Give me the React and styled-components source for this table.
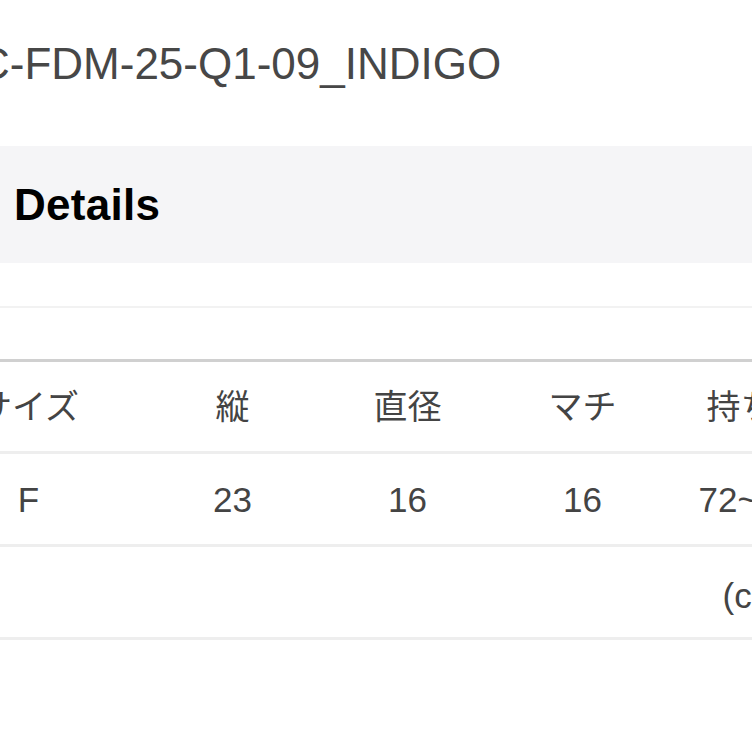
import React from "react";
import styled, { createGlobalStyle } from "styled-components";

const Global = createGlobalStyle`
  html, body { margin: 0; padding: 0; background: #ffffff; }
  body { overflow: hidden; width: 752px; height: 752px; }
  #root { width: 752px; }
`;

const Page = styled.div`
  width: 752px;
  overflow: hidden;
  font-family: "Liberation Sans", "Noto Sans CJK JP", sans-serif;
  color: #444444;
`;

const ProductCode = styled.div`
  margin: 42px 0 0 -22px;
  font-size: 44px;
  line-height: 44px;
  height: 44px;
  white-space: nowrap;
  color: #474747;
`;

const SectionBand = styled.div`
  margin-top: 60px;
  height: 117px;
  background: #f5f5f7;
  display: flex;
  align-items: center;
  padding-left: 14px;
`;

const SectionTitle = styled.h2`
  margin: 0;
  font-size: 44px;
  line-height: 44px;
  font-weight: 700;
  color: #000000;
  letter-spacing: 0.3px;
`;

const Spacer = styled.div`
  height: 43px;
  border-bottom: 2px solid #f2f2f2;
`;

const Table = styled.div`
  margin-top: 51px;
  margin-left: -88px;
  width: 933px;
  border-top: 3px solid #d0d0d0;
`;

const Row = styled.div`
  display: grid;
  grid-template-columns: 233px repeat(4, 175px);
  height: ${(p) => p.$h}px;
  border-bottom: 3px solid #eeeeee;
  align-items: center;
  padding-top: ${(p) => p.$pt || 0}px;
  box-sizing: border-box;
`;

const Cell = styled.div`
  display: flex;
  justify-content: center;
  align-items: center;
  white-space: nowrap;
  grid-column: ${(p) => p.$col || "auto"};
  font-size: ${(p) => (p.$cjk ? 34 : 35)}px;
  line-height: 1;
  color: #444444;
`;

const header = ["サイズ", "縦", "直径", "マチ", "持ち手"];
const values = ["F", "23", "16", "16", "72~120"];

export default function App() {
  return (
    <Page>
      <Global />
      <ProductCode>C-FDM-25-Q1-09_INDIGO</ProductCode>
      <SectionBand>
        <SectionTitle>Details</SectionTitle>
      </SectionBand>
      <Spacer />
      <Table>
        <Row $h={92}>
          {header.map((h) => (
            <Cell key={h} $cjk>
              {h}
            </Cell>
          ))}
        </Row>
        <Row $h={93}>
          {values.map((v, i) => (
            <Cell key={i}>{v}</Cell>
          ))}
        </Row>
        <Row $h={93} $pt={6}>
          <Cell $col={5}>(cm)</Cell>
        </Row>
      </Table>
    </Page>
  );
}
